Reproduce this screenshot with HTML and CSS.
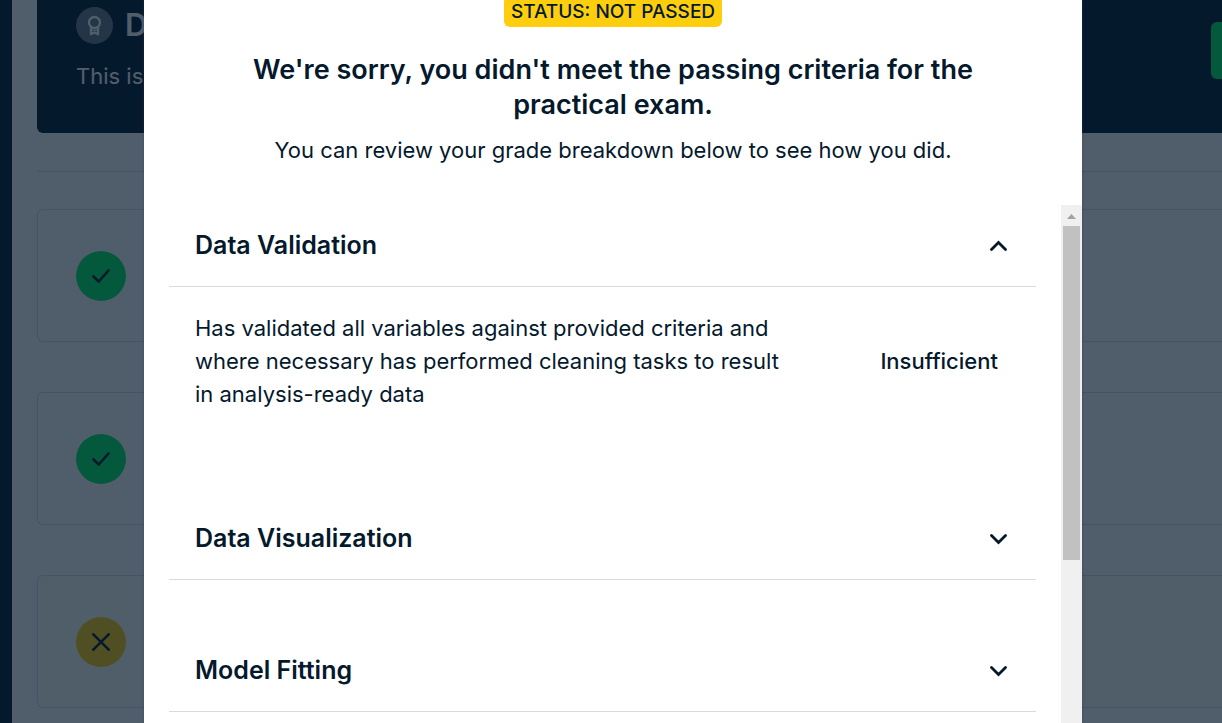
FILE: index.html
```
<!DOCTYPE html>
<html lang="en">
<head>
<meta charset="utf-8">
<title>Practical exam result</title>
<link rel="stylesheet" href="styles.css">
</head>
<body>
<div class="app">
  <nav class="rail" aria-label="Main"></nav>
  <main class="page">
    <header class="hero">
      <div class="hero-text">
        <h1 class="hero-title">
          <span class="medal">
            <svg width="15" height="21" viewBox="0 0 15 21" fill="none" stroke="currentColor" stroke-width="2.3"><circle cx="7.500" cy="7.500" r="5.500"/><path d="M4 12v7.200l3.500-1.800 3.500 1.800V12" stroke-linejoin="round"/><path d="M5 15.200h5" stroke-width="1.200"/></svg>
          </span>
          D
        </h1>
        <p class="hero-sub">This is</p>
      </div>
      <button class="hero-action" type="button" aria-label="Start"></button>
    </header>
    <hr class="rule">
    <div class="steps">
      <section class="step"><span class="state state-ok"><svg width="18" height="14" viewBox="0 0 18 14"><path d="M1.500 7.500l5.200 5L16.500 1.500"/></svg></span></section>
      <section class="step"><span class="state state-ok"><svg width="18" height="14" viewBox="0 0 18 14"><path d="M1.500 7.500l5.200 5L16.500 1.500"/></svg></span></section>
      <section class="step step-warn"><span class="state state-warn"><svg width="18" height="18" viewBox="0 0 18 18"><path d="M1.300 1.300l15.400 15.400M16.700 1.300L1.300 16.700"/></svg></span></section>
    </div>
  </main>
</div>
<div class="overlay">
  <div class="modal" role="dialog" aria-modal="true" aria-labelledby="result-title">
    <div class="modal-head">
      <strong class="badge">STATUS: NOT PASSED</strong>
      <h2 class="title" id="result-title">We're sorry, you didn't meet the passing criteria for the practical exam.</h2>
      <p class="subtitle">You can review your grade breakdown below to see how you did.</p>
    </div>
    <div class="scroller">
      <div class="sections">
        <section class="section">
          <button class="section-head" type="button" aria-expanded="true">Data Validation
            <svg class="chevron" width="18" height="12" viewBox="0 0 18 12"><path d="M1.500 9.500l7-7 7 7"/></svg>
          </button>
          <div class="panel">
            <p class="criterion">Has validated all variables against provided criteria and where necessary has performed cleaning tasks to result in analysis-ready data</p>
            <strong class="grade">Insufficient</strong>
          </div>
        </section>
        <section class="section">
          <button class="section-head" type="button" aria-expanded="false">Data Visualization
            <svg class="chevron" width="18" height="12" viewBox="0 0 18 12"><path d="M1.500 2.500l7 7 7-7"/></svg>
          </button>
        </section>
        <section class="section">
          <button class="section-head" type="button" aria-expanded="false">Model Fitting
            <svg class="chevron" width="18" height="12" viewBox="0 0 18 12"><path d="M1.500 2.500l7 7 7-7"/></svg>
          </button>
        </section>
      </div>
      <div class="track" aria-hidden="true">
        <svg class="track-up" width="9" height="5" viewBox="0 0 9 5"><path d="M0 5L4.500 0 9 5z"/></svg>
        <div class="thumb"></div>
      </div>
    </div>
  </div>
</div>
</body>
</html>
```
FILE: styles.css
```
* { box-sizing: border-box; }
html, body { height: 100%; }
body {
  margin: 0;
  overflow: hidden;
  background: #fff;
  color: #05192d;
  font-family: Inter, Lato, sans-serif;
  font-size: 22px;
  line-height: 33px;
}
h1, h2, p { margin: 0; }
button { padding: 0; font: inherit; color: inherit; border: 0; background: none; }

.app { display: flex; height: 100%; }
.rail { flex: none; width: 12px; background: #05192d; }
.page { flex: 1; min-width: 0; padding-left: 25px; overflow: hidden; }
.hero {
  display: flex;
  justify-content: space-between;
  height: 133px;
  padding: 5px 0 0 39px;
  border-radius: 0 0 0 6px;
  background: #05192d;
  color: #fff;
}
.hero-title {
  display: flex;
  align-items: center;
  gap: 12px;
  font-size: 31px;
  font-weight: 600;
  line-height: 40px;
}
.medal {
  display: flex;
  align-items: center;
  justify-content: center;
  width: 37px;
  height: 37px;
  border-radius: 50%;
  background: #69757f;
}
.hero-sub { margin-top: 15px; }
.hero-action {
  width: 11px;
  height: 57px;
  margin-top: 17px;
  border-radius: 6px 0 0 6px;
  background: #03ef62;
}
.rule { height: 1px; margin: 38px 0 37px; border: 0; background: #d9d9e2; }
.steps { display: flex; flex-direction: column; gap: 50px; }
.step {
  display: flex;
  align-items: center;
  height: 133px;
  padding-left: 38px;
  border: 1px solid #d9d9e2;
  border-right: 0;
  border-radius: 6px 0 0 6px;
}
.step-warn { background: #fffff4; }
.state {
  display: flex;
  align-items: center;
  justify-content: center;
  width: 50px;
  height: 50px;
  border-radius: 50%;
}
.state-ok { background: #03ef62; }
.state-warn { background: #fcce0d; }
.state path {
  fill: none;
  stroke: #05192d;
  stroke-width: 2.6;
  stroke-linecap: round;
}

.overlay {
  position: absolute;
  inset: 0;
  display: flex;
  padding: 0 140px 0 144px;
  overflow: hidden;
  background: rgba(5, 25, 45, 0.7);
}
.modal {
  display: flex;
  flex: 1;
  flex-direction: column;
  min-width: 0;
  background: #fff;
  box-shadow: 0 0 3px rgba(48, 57, 105, 0.5);
}
.modal-head {
  display: flex;
  flex-direction: column;
  align-items: center;
  height: 205px;
  padding: 0 75px;
  text-align: center;
}
.badge {
  flex: none;
  margin-top: -4px;
  padding: 0 7px;
  border-radius: 6px;
  background: #fcce0d;
  font-size: 19px;
  font-weight: 500;
  line-height: 31px;
}
.title { margin-top: 25px; font-size: 27px; font-weight: 600; line-height: 35px; }
.subtitle { margin-top: 12px; }
.scroller { display: flex; flex: 1; min-height: 0; }
.sections { flex: 1; padding: 0 25px; overflow: hidden; }
.section { margin-bottom: 50px; }
.section-head {
  display: flex;
  align-items: center;
  justify-content: space-between;
  width: 100%;
  height: 82px;
  padding: 0 28px 0 26px;
  border-bottom: 1px solid #d9dade;
  font-size: 25px;
  font-weight: 600;
}
.chevron path {
  fill: none;
  stroke: #05192d;
  stroke-width: 2.8;
  stroke-linecap: round;
}
.panel {
  display: flex;
  align-items: center;
  justify-content: space-between;
  padding: 25px 38px 37px 26px;
}
.criterion { width: 588px; }
.grade { font-weight: 500; }
.track {
  flex: none;
  display: flex;
  flex-direction: column;
  align-items: center;
  width: 21px;
  background: #f0f0f0;
}
.track-up { flex: none; margin: 9px 0 7px; fill: #a3a3a3; }
.thumb { width: 17px; height: 334px; background: #c1c1c1; }
```
